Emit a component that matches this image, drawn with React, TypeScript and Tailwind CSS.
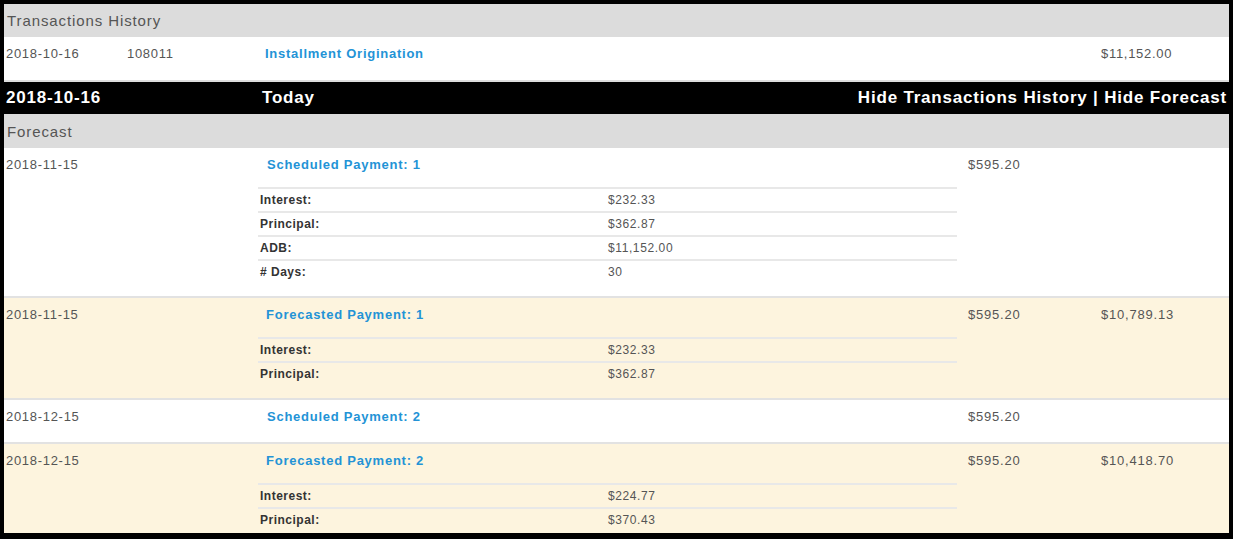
import React from 'react';

type Detail = { label: string; value: string };

type ForecastRow = {
  date: string;
  title: string;
  kind: 'scheduled' | 'forecast';
  amount: string;
  balance?: string;
  details: Detail[];
};

const ROWS: ForecastRow[] = [
  {
    date: '2018-11-15',
    title: 'Scheduled Payment: 1',
    kind: 'scheduled',
    amount: '$595.20',
    details: [
      { label: 'Interest:', value: '$232.33' },
      { label: 'Principal:', value: '$362.87' },
      { label: 'ADB:', value: '$11,152.00' },
      { label: '# Days:', value: '30' },
    ],
  },
  {
    date: '2018-11-15',
    title: 'Forecasted Payment: 1',
    kind: 'forecast',
    amount: '$595.20',
    balance: '$10,789.13',
    details: [
      { label: 'Interest:', value: '$232.33' },
      { label: 'Principal:', value: '$362.87' },
    ],
  },
  {
    date: '2018-12-15',
    title: 'Scheduled Payment: 2',
    kind: 'scheduled',
    amount: '$595.20',
    details: [],
  },
  {
    date: '2018-12-15',
    title: 'Forecasted Payment: 2',
    kind: 'forecast',
    amount: '$595.20',
    balance: '$10,418.70',
    details: [
      { label: 'Interest:', value: '$224.77' },
      { label: 'Principal:', value: '$370.43' },
    ],
  },
];

const COLS = 'grid grid-cols-[120px_134px_699px_133px_1fr]';

export default function App() {
  return (
    <div className="w-[1233px] h-[539px] bg-black pt-[4px] px-[4px] font-['Liberation_Sans',Arial,sans-serif]">
      <div className="h-[529px] overflow-hidden bg-white">
        {/* Transactions History */}
        <div className="h-[33px] bg-[#dcdcdc] pl-[3px] pt-[1px] flex items-center text-[15px] tracking-[0.9px] text-[#555]">
          Transactions History
        </div>
        <div className={`${COLS} h-[45px] pt-[9px] border-b-2 border-[#dedede] text-[13px] tracking-[0.7px] text-[#555] leading-[16px]`}>
          <div className="pl-[2px]">2018-10-16</div>
          <div className="pl-[3px]">108011</div>
          <div className="pl-[7px] font-bold text-[#2393d6] tracking-[0.75px]">Installment Origination</div>
          <div />
          <div className="pl-[11px]">$11,152.00</div>
        </div>

        {/* Today bar */}
        <div className={`${COLS} h-[32px] bg-black text-white font-bold text-[17px] tracking-[0.8px] items-center`}>
          <div className="pl-[2px]">2018-10-16</div>
          <div />
          <div className="col-span-3 flex justify-between pl-[4px] pr-[2px]">
            <span>Today</span>
            <span>Hide Transactions History | Hide Forecast</span>
          </div>
        </div>

        {/* Forecast */}
        <div className="h-[34px] bg-[#dcdcdc] pl-[3px] pt-[2px] flex items-center text-[15px] tracking-[0.9px] text-[#555]">
          Forecast
        </div>
        {ROWS.map((row, i) => (
          <ForecastLine key={i} row={row} last={i === ROWS.length - 1} />
        ))}
      </div>
    </div>
  );
}

function ForecastLine({ row, last }: { row: ForecastRow; last: boolean }) {
  const bg = row.kind === 'forecast' ? 'bg-[#fdf4de]' : 'bg-white';
  const pb = row.details.length ? 'pb-[13px]' : 'pb-[17px]';
  return (
    <div className={`${COLS} ${bg} ${pb} pt-[9px] ${last ? '' : 'border-b-2 border-[#e2e2e2]'} text-[13px] tracking-[0.7px] text-[#555] leading-[16px]`}>
      <div className="col-span-2 pl-[2px]">{row.date}</div>
      <div>
        <div className={`font-bold text-[#2393d6] tracking-[0.75px] ${row.kind === 'scheduled' ? 'pl-[9px]' : 'pl-[8px]'}`}>
          {row.title}
        </div>
        {row.details.length > 0 && (
          <div className="mt-[14px]">
            {row.details.map((d) => (
              <div key={d.label} className="grid grid-cols-[350px_1fr] h-[24px] items-center border-t-2 border-[#e8e8e8] text-[12px] tracking-[0.5px]">
                <div className="pl-[2px] font-bold text-[#333]">{d.label}</div>
                <div className="text-[#555] tracking-[0.6px]">{d.value}</div>
              </div>
            ))}
          </div>
        )}
      </div>
      <div className="pl-[11px] tracking-[0.8px]">{row.amount}</div>
      <div className="pl-[11px] tracking-[0.8px]">{row.balance ?? ''}</div>
    </div>
  );
}
